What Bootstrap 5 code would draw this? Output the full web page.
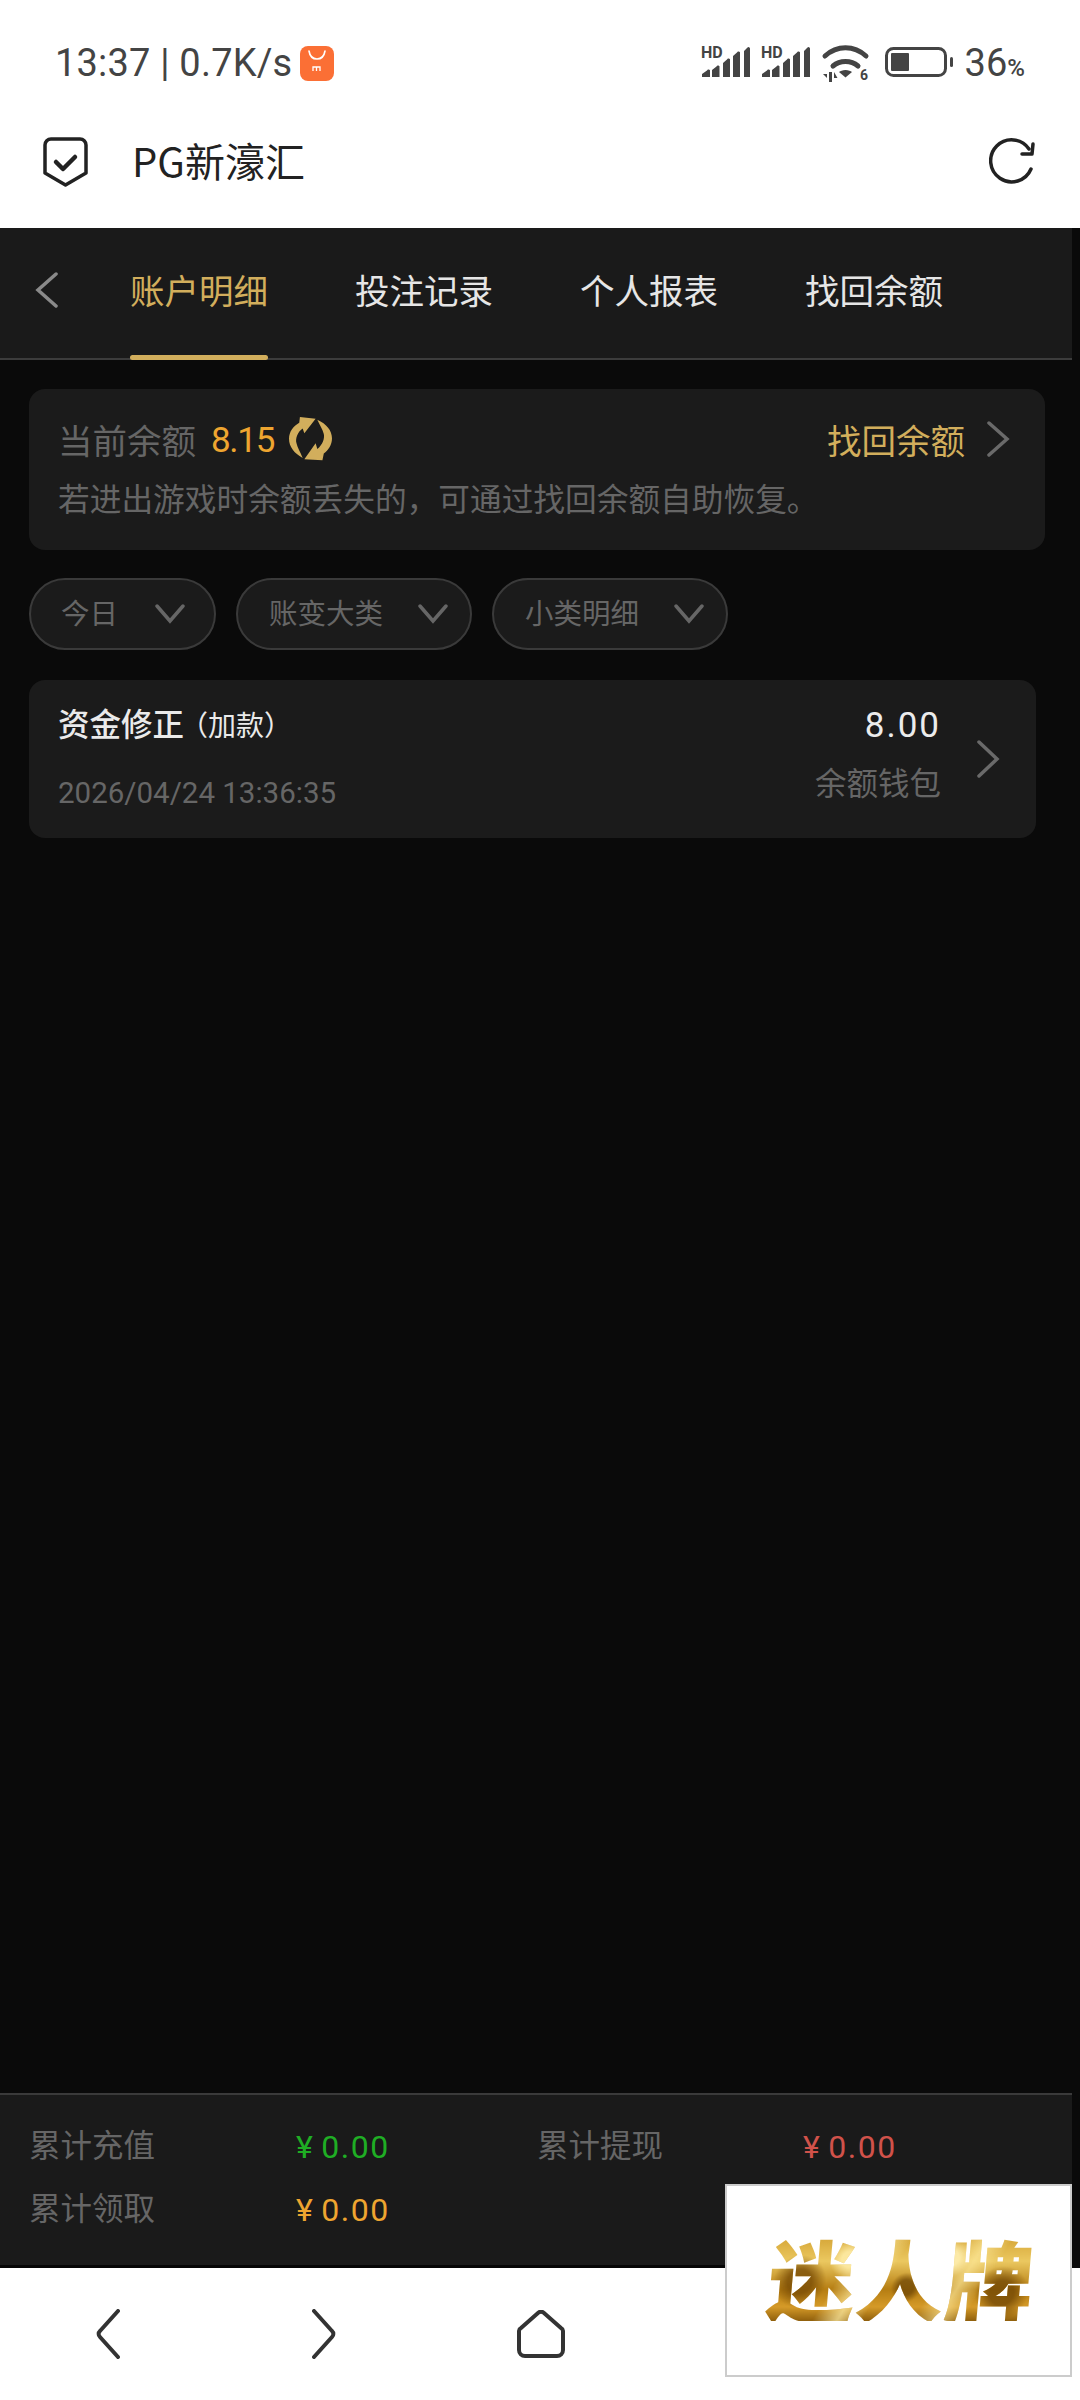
<!DOCTYPE html>
<html lang="zh-CN">
<head>
    <meta charset="UTF-8">
    <meta name="viewport" content="width=device-width, initial-scale=1.0">
    <title>PG新濠汇</title>
    <link href="https://cdn.jsdelivr.net/npm/bootstrap@5.3.0/dist/css/bootstrap.min.css" rel="stylesheet">
    <style>
        html, body {
            width: 1080px;
            height: 2400px;
            margin: 0;
            overflow: hidden;
            background-color: #fff;
            font-family: "Noto Sans CJK SC", "Noto Sans", sans-serif;
        }

        .screen { position: relative; width: 1080px; height: 2400px; }

        /* system status bar */
        .status-strip { height: 122px; padding: 4px 55px 0; color: #444; }
        .status-clock { font: 400 38px Roboto, sans-serif; letter-spacing: .2px; }
        .shop-tile { width: 34px; height: 35px; margin-left: 8px; border-radius: 8px; background: #fb6f35; }
        .status-pct { font: 400 38px Roboto, sans-serif; margin-left: 8px; }
        .status-pct span { font-size: 24px; font-weight: 500; }

        /* browser title row */
        .title-row { height: 106px; padding: 0 44px 26px 43px; color: #222; }
        .title-text { font-size: 40px; margin-left: 44px; line-height: 1; padding-bottom: 5px; }

        /* dark app area */
        .app-pane { height: 2040px; background: #0a0a0a; }
        .tab-strip { width: 1072px; height: 132px; background: #1a1a1a; border-bottom: 2px solid #3c3c3c; padding-left: 35px; }
        .tab-back { width: 95px; padding-bottom: 6px; }
        .tab-item { position: relative; font-size: 34.500px; line-height: 1; color: #e6e6e6; margin-right: 87px; padding-bottom: 8px; }
        .tab-item.on { color: #d2ae5c; }
        .tab-item.on::after { content: ""; position: absolute; left: 0; right: 0; bottom: -46px; height: 5px; border-radius: 3px; background: #d2ae5c; }

        .body-wrap { padding: 29px 0 0 29px; }
        .balance-box { width: 1016px; height: 161px; background: #1b1b1b; border-radius: 16px; padding: 26px 35px 0 29px; }
        .balance-top { height: 48px; }
        .soft-label { font-size: 34.500px; line-height: 1; color: #666; }
        .balance-num { font: 400 35px Roboto, sans-serif; letter-spacing: -1.300px; color: #eea530; margin-left: 15px; padding-top: 2px; }
        .balance-spin { margin-left: 15px; }
        .gold-link { font-size: 34.500px; line-height: 1; color: #d2ae5c; margin-right: 21px; }
        .balance-hint { font-size: 31.700px; line-height: 1; color: #666; margin-top: 19px; white-space: nowrap; }

        .pill-row { margin-top: 28px; gap: 20px; }
        .pill-btn { height: 72px; border: 2px solid #3a3a3a; border-radius: 36px; background: #1b1b1b; color: #666; font-size: 28.500px; line-height: 1; padding: 0 22px 0 31px; }
        .pill-btn span { padding-bottom: 4px; }
        .pill-btn svg { margin-left: 35px; }
        .pill-btn.short-pill { padding: 0 29px 0 30px; }
        .pill-btn.short-pill svg { margin-left: 37px; }

        .record-box { width: 1007px; height: 158px; margin-top: 30px; background: #1b1b1b; border-radius: 16px; padding: 0 36px 0 29px; }
        .record-left { padding-bottom: 3px; }
        .record-right { margin-right: 35px; padding-bottom: 12px; }
        .record-title { font-size: 31.500px; line-height: 1; font-weight: 500; color: #eaeaea; }
        .record-title span { font-size: 28px; font-weight: 400; margin-left: -4px; }
        .record-date { font: 400 29.500px Roboto, sans-serif; color: #666; margin-top: 40px; line-height: 1; }
        .record-amt { font: 400 35px Roboto, sans-serif; letter-spacing: 2px; color: #ececec; line-height: 1; text-align: right; }
        .record-wallet { font-size: 31.500px; line-height: 1; color: #666; margin-top: 23px; }

        .sum-strip { width: 1072px; height: 175px; margin-top: auto; background: #1a1a1a; border-top: 2px solid #3a3a3a; border-bottom: 3px solid #050505; padding: 33px 0 0 29px; }
        .sum-row { height: 62.500px; }
        .sum-label { font-size: 31.500px; line-height: 1; color: #666; }
        .sum-value { font: 400 32px Roboto, sans-serif; letter-spacing: 1.500px; line-height: 1; margin-top: 3px; }
        .sum-value b { font-weight: 400; margin-right: 7px; }
        .col-a { width: 267px; }
        .col-b { width: 241px; }
        .col-c { width: 266px; }
        .v-green { color: #1fae24; }
        .v-amber { color: #eea530; }
        .v-red { color: #d0524a; }

        /* browser bottom bar */
        .nav-strip { height: 132px; padding-left: 96px; }

        /* floating brand tile */
        .brand-tile { position: absolute; left: 725px; top: 2184px; width: 347px; height: 193px; background: #fff; border: 2px solid #ccc; padding: 0 0 8px 6px; }
        .brand-word {
            font-size: 88px;
            font-weight: 900;
            line-height: 1;
            letter-spacing: 1px;
            white-space: nowrap;
            transform: skewX(-5deg);
            background:
                radial-gradient(circle at 12% 55%, rgba(120,75,5,.8) 0 5%, transparent 11%),
                radial-gradient(circle at 30% 30%, rgba(255,238,170,.85) 0 4%, transparent 10%),
                radial-gradient(circle at 52% 62%, rgba(110,70,5,.75) 0 5%, transparent 10%),
                radial-gradient(circle at 68% 28%, rgba(255,240,180,.85) 0 4%, transparent 10%),
                radial-gradient(circle at 88% 68%, rgba(115,72,5,.8) 0 5%, transparent 11%),
                linear-gradient(118deg, transparent 30%, rgba(255,240,170,.7) 38%, transparent 46%, transparent 62%, rgba(255,236,160,.65) 70%, transparent 78%),
                linear-gradient(180deg, #d2a030 0%, #ebc860 32%, #b57d12 64%, #d59a28 84%, #8f5f0c 100%);
            -webkit-background-clip: text;
            background-clip: text;
            color: transparent;
        }
    </style>
</head>
<body>
<div class="screen">
    <div class="status-strip d-flex align-items-center">
        <span class="status-clock">13:37 | 0.7K/s</span>
        <span class="shop-tile d-flex align-items-center justify-content-center">
            <svg width="34" height="35" viewBox="0 0 34 35"><path d="M9 5c1 6 4 8 8 8s7-2 8-8" fill="none" stroke="#fff" stroke-width="1.600" stroke-linecap="round"/><path d="M13 25v-4h7v4M16.500 21v4" fill="none" stroke="#fff" stroke-width="1.300"/></svg>
        </span>
        <div class="ms-auto d-flex align-items-center">
            <svg width="262" height="44" viewBox="0 0 262 44" fill="#444">
                <g id="sig">
                    <text x="6" y="17" font-family="Roboto, sans-serif" font-weight="700" font-size="16">HD</text>
                    <path d="M7 36v-3l5-3.500a1.500 1.500 0 0 1 3 1V36zM17 36V29l4.500-3.500a1.500 1.500 0 0 1 3 1V36zM28 36V22l4-3.500a1.500 1.500 0 0 1 3 1V36zM38 36V15l4-3.500a1.500 1.500 0 0 1 3 1V36zM49 36V10l3.500-3.500a1.500 1.500 0 0 1 2.500 1V36z"/>
                </g>
                <use href="#sig" x="60"/>
                <g fill="none" stroke="#444" stroke-width="5" stroke-linecap="round">
                    <path d="M130 15c12-11 29-11 41 0"/>
                    <path d="M138 25c7-6 18-6 25 0"/>
                </g>
                <path d="M150.500 29c3 0 5 1 6.500 2l-6.500 5.500-6.500-5.500c1.500-1 3.500-2 6.500-2z"/>
                <path d="M128 33l4 4v-4zM134 31v10h3V31zM139 31v6h3.500z"/>
                <text x="165" y="39" font-family="Roboto, sans-serif" font-weight="700" font-size="14">6</text>
                <rect x="191.500" y="7.500" width="59" height="27" rx="7" fill="none" stroke="#444" stroke-width="3"/>
                <rect x="196" y="12" width="18" height="18" rx="1"/>
                <rect x="255" y="16" width="3" height="10" rx="1.500"/>
            </svg>
            <span class="status-pct">36<span>%</span></span>
        </div>
    </div>

    <div class="title-row d-flex align-items-center">
        <svg width="45" height="50" viewBox="0 0 45 50" fill="none" stroke="#222" stroke-width="3.500" stroke-linejoin="round" stroke-linecap="round">
            <path d="M8 2h29a6 6 0 0 1 6 6v28l-20.500 12L2 36V8a6 6 0 0 1 6-6z"/>
            <path d="M13 25l7 7 12-12" stroke-width="4.500"/>
        </svg>
        <span class="title-text">PG新濠汇</span>
        <svg class="ms-auto" width="47" height="48" viewBox="0 0 47 48" fill="none" stroke="#222" stroke-width="3.500" stroke-linecap="round" stroke-linejoin="round">
            <path d="M42 31A21 21 0 1 1 40 11"/>
            <path d="M44 6l-1 10-10 0"/>
        </svg>
    </div>

    <div class="app-pane d-flex flex-column">
        <nav class="tab-strip d-flex align-items-center">
            <div class="tab-back">
                <svg width="24" height="36" viewBox="0 0 24 36" fill="none" stroke="#8a8a8a" stroke-width="3.500" stroke-linecap="round"><path d="M21 2L3 18l18 16"/></svg>
            </div>
            <a class="tab-item on text-decoration-none">账户明细</a>
            <a class="tab-item text-decoration-none">投注记录</a>
            <a class="tab-item text-decoration-none">个人报表</a>
            <a class="tab-item text-decoration-none">找回余额</a>
        </nav>

        <div class="body-wrap">
            <section class="balance-box">
                <div class="balance-top d-flex align-items-center">
                    <span class="soft-label">当前余额</span>
                    <span class="balance-num">8.15</span>
                    <svg class="balance-spin" width="43" height="44" viewBox="30 28 126 129" fill="#d2ae5c">
                        <path d="M62 28L108 33 75 76 70 62C55 72 48 92 52 105 55 118 62 128 70 148 45 135 30 115 30 92 30 72 42 55 60 45z"/>
                        <path d="M128 155L75 152 108 105 113 122C128 110 135 92 132 78 128 62 120 52 113 36 140 48 156 68 156 90 156 110 145 125 132 135z"/>
                    </svg>
                    <span class="gold-link ms-auto">找回余额</span>
                    <svg width="24" height="36" viewBox="0 0 24 36" fill="none" stroke="#6a6a6a" stroke-width="3.500" stroke-linecap="round"><path d="M3 2l18 16L3 34"/></svg>
                </div>
                <p class="balance-hint mb-0">若进出游戏时余额丢失的，可通过找回余额自助恢复。</p>
            </section>

            <div class="pill-row d-flex">
                <div class="pill-btn short-pill d-flex align-items-center"><span>今日</span>
                    <svg width="30" height="20" viewBox="0 0 30 20" fill="none" stroke="#666" stroke-width="3.500" stroke-linecap="round"><path d="M2 2l13 15L28 2"/></svg>
                </div>
                <div class="pill-btn d-flex align-items-center"><span>账变大类</span>
                    <svg width="30" height="20" viewBox="0 0 30 20" fill="none" stroke="#666" stroke-width="3.500" stroke-linecap="round"><path d="M2 2l13 15L28 2"/></svg>
                </div>
                <div class="pill-btn d-flex align-items-center"><span>小类明细</span>
                    <svg width="30" height="20" viewBox="0 0 30 20" fill="none" stroke="#666" stroke-width="3.500" stroke-linecap="round"><path d="M2 2l13 15L28 2"/></svg>
                </div>
            </div>

            <section class="record-box d-flex align-items-center">
                <div class="record-left">
                    <div class="record-title">资金修正<span>（加款）</span></div>
                    <div class="record-date">2026/04/24 13:36:35</div>
                </div>
                <div class="record-right ms-auto">
                    <div class="record-amt">8.00</div>
                    <div class="record-wallet">余额钱包</div>
                </div>
                <svg width="24" height="38" viewBox="0 0 24 38" fill="none" stroke="#6a6a6a" stroke-width="3.500" stroke-linecap="round"><path d="M3 2l18 17L3 36"/></svg>
            </section>
        </div>

        <footer class="sum-strip">
            <div class="sum-row d-flex align-items-start">
                <span class="sum-label col-a">累计充值</span>
                <span class="sum-value v-green col-b"><b>¥</b>0.00</span>
                <span class="sum-label col-c">累计提现</span>
                <span class="sum-value v-red"><b>¥</b>0.00</span>
            </div>
            <div class="sum-row d-flex align-items-start">
                <span class="sum-label col-a">累计领取</span>
                <span class="sum-value v-amber col-b"><b>¥</b>0.00</span>
            </div>
        </footer>
    </div>

    <div class="nav-strip d-flex align-items-center">
        <svg width="24" height="50" viewBox="0 0 24 50" fill="none" stroke="#333" stroke-width="4" stroke-linecap="round" stroke-linejoin="round"><path d="M22 2L4 22a4 4 0 0 0 0 6l18 20"/></svg>
        <svg style="margin-left:192px" width="24" height="50" viewBox="0 0 24 50" fill="none" stroke="#333" stroke-width="4" stroke-linecap="round" stroke-linejoin="round"><path d="M2 2l18 20a4 4 0 0 1 0 6L2 48"/></svg>
        <svg style="margin-left:181px" width="48" height="48" viewBox="0 0 48 48" fill="none" stroke="#333" stroke-width="4" stroke-linejoin="round"><path d="M21 3a4 4 0 0 1 6 0l17 15a4 4 0 0 1 2 3v19a6 6 0 0 1-6 6H8a6 6 0 0 1-6-6V21a4 4 0 0 1 2-3z"/></svg>
    </div>

    <div class="brand-tile d-flex align-items-center justify-content-center">
        <span class="brand-word">迷人牌</span>
    </div>
</div>
<script src="https://cdn.jsdelivr.net/npm/bootstrap@5.3.0/dist/js/bootstrap.bundle.min.js"></script>
</body>
</html>
